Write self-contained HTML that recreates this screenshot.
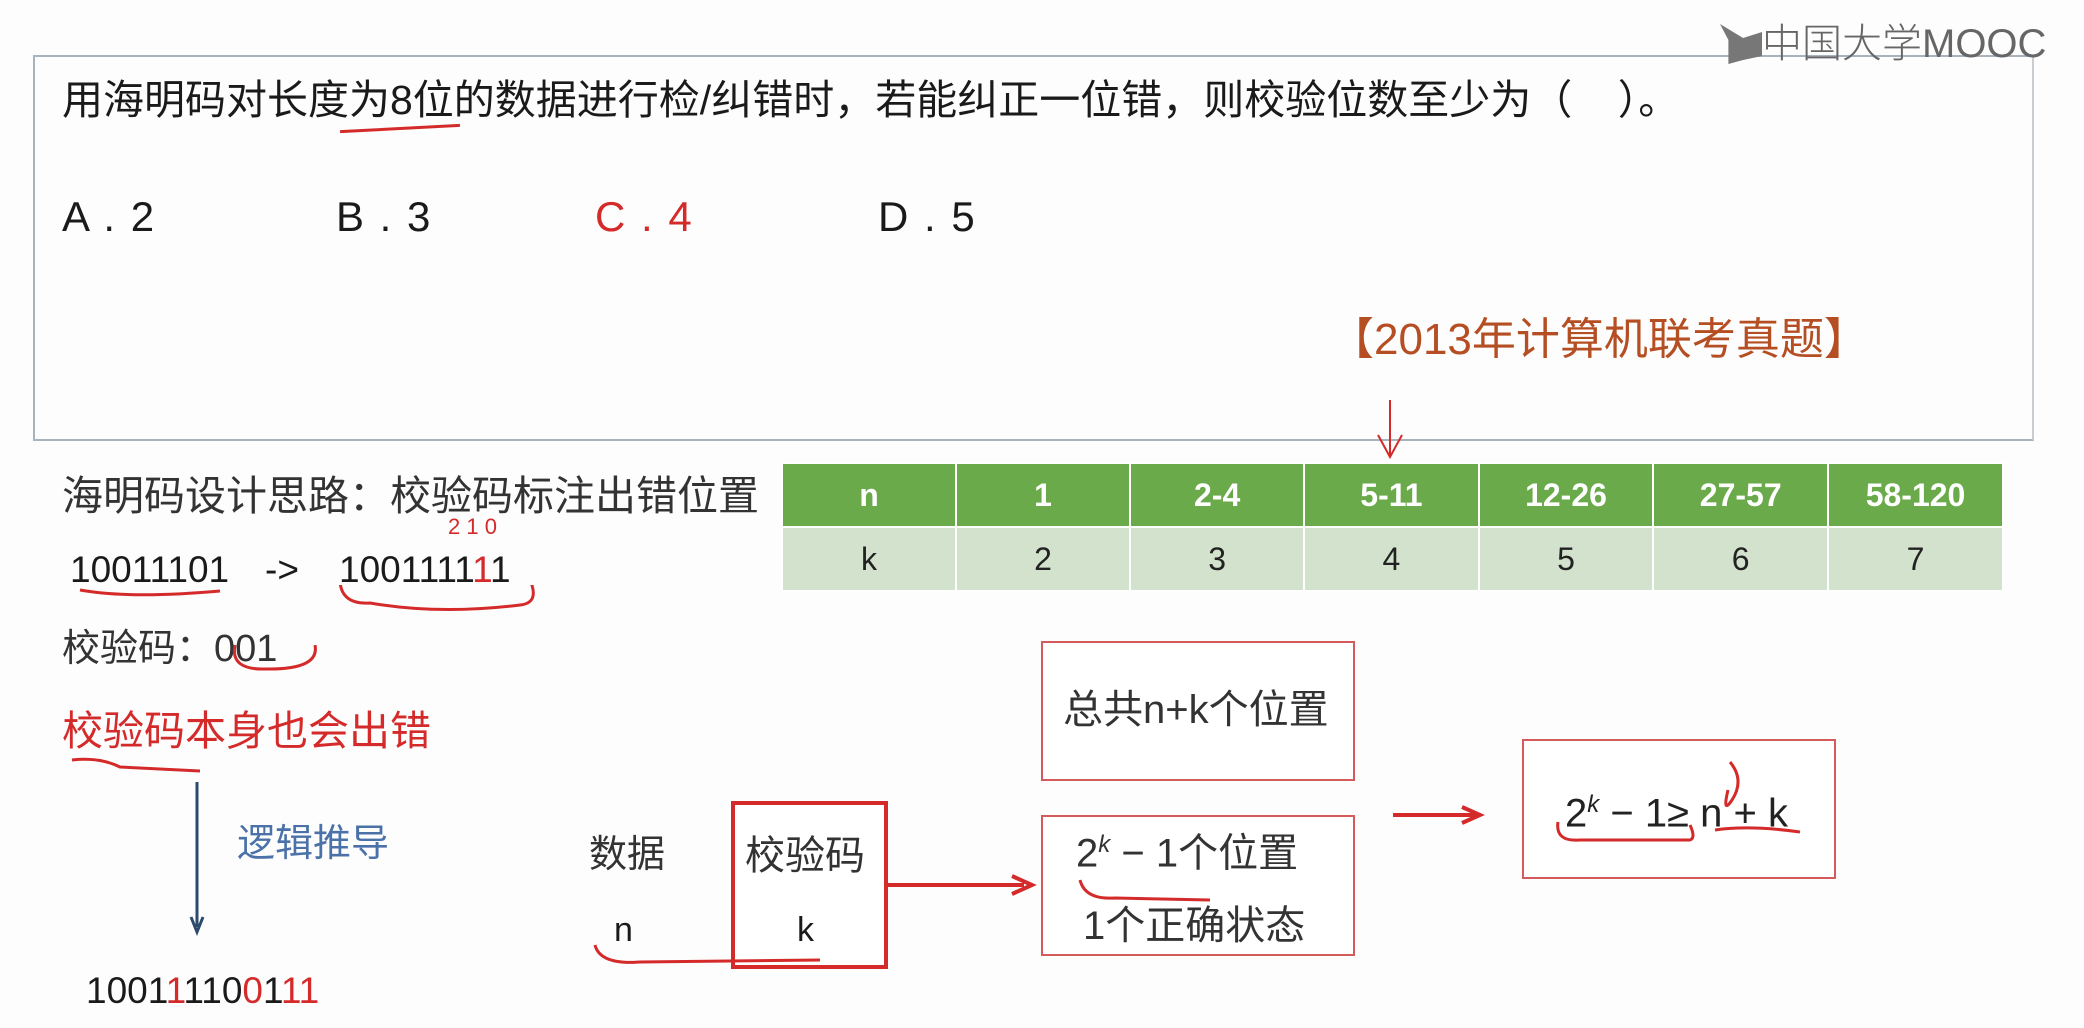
<!DOCTYPE html>
<html><head><meta charset="utf-8"><style>
body{margin:0;width:2084px;height:1028px;background:#fdfdfd;position:relative;overflow:hidden;font-family:"Liberation Sans","Noto Sans CJK SC",sans-serif;color:#1a1a1a}
.a{position:absolute;white-space:nowrap;line-height:1}
.r{color:#d42a2a}
table{border-collapse:collapse;position:absolute;left:781px;top:462px;width:1223px;font-size:32px;text-align:center}
td{border:2px solid #fff;height:60px;width:174px}
.h td{background:#6aaa4a;color:#fff;font-weight:bold}
.k td{background:#d3e2cc;color:#222}
.box{position:absolute;border:2px solid #d55a5a;background:#fff}
</style></head><body>
<div style="position:absolute;left:33px;top:55px;width:1997px;height:382px;border:2px solid #a9b3bd;border-right-color:#c8cdd2"></div>
<div class="a" style="left:1720px;top:24px;width:42px;height:40px;background:#777;clip-path:polygon(0 0,55% 35%,100% 20%,100% 80%,55% 90%,20% 100%,20% 40%)"></div>
<div class="a" style="left:1762px;top:24px;font-size:40px;color:#666;font-weight:300">中国大学MOOC</div>
<div class="a" style="left:62px;top:80px;font-size:41px">用海明码对长度为8位的数据进行检/纠错时，若能纠正一位错，则校验位数至少为（&nbsp;&nbsp;&nbsp;&nbsp;）。</div>
<div class="a" style="left:340px;top:127px;width:120px;height:3px;background:#d42a2a;transform:rotate(-3deg)"></div>
<div class="a" style="left:62px;top:196px;font-size:42px;word-spacing:4px">A . 2</div>
<div class="a" style="left:336px;top:196px;font-size:42px;word-spacing:4px">B . 3</div>
<div class="a r" style="left:595px;top:196px;font-size:42px;word-spacing:4px">C . 4</div>
<div class="a" style="left:878px;top:196px;font-size:42px;word-spacing:4px">D . 5</div>
<div class="a" style="left:1330px;top:318px;font-size:44px;color:#b54e22">【2013年计算机联考真题】</div>
<svg class="a" style="left:1370px;top:395px" width="40" height="70"><path d="M20 5 L20 60 M8 40 L20 62 L32 40" stroke="#d42a2a" stroke-width="2" fill="none"/></svg>
<table><tr class="h"><td>n</td><td>1</td><td>2-4</td><td>5-11</td><td>12-26</td><td>27-57</td><td>58-120</td></tr>
<tr class="k"><td>k</td><td>2</td><td>3</td><td>4</td><td>5</td><td>6</td><td>7</td></tr></table>
<div class="a" style="left:62px;top:476px;font-size:41px;color:#333">海明码设计思路：校验码标注出错位置</div>
<div class="a r" style="left:448px;top:516px;font-size:22px">2 1 0</div>
<div class="a" style="left:70px;top:551px;font-size:37px">10011101</div>
<div class="a" style="left:265px;top:551px;font-size:37px">-&gt;</div>
<div class="a" style="left:339px;top:551px;font-size:37px">10011<span>1</span>1<span class="r">1</span>1</div>
<svg class="a" style="left:60px;top:585px" width="480" height="40"><path d="M20 5 Q70 14 160 6 M280 -10 Q278 20 310 18 Q380 30 460 20 Q480 18 470 -5" stroke="#d42a2a" stroke-width="3" fill="none"/></svg>
<div class="a" style="left:62px;top:630px;font-size:38px;color:#333">校验码：001</div>
<svg class="a" style="left:225px;top:645px" width="100" height="40"><path d="M10 0 Q5 25 40 24 Q95 25 90 0" stroke="#d42a2a" stroke-width="3" fill="none"/></svg>
<div class="a r" style="left:62px;top:711px;font-size:41px">校验码本身也会出错</div>
<svg class="a" style="left:70px;top:755px" width="140" height="30"><path d="M2 5 Q30 2 50 12 L130 16" stroke="#d42a2a" stroke-width="3" fill="none"/></svg>
<svg class="a" style="left:185px;top:782px" width="24" height="155"><path d="M12 0 L12 145 M6 135 L12 150 L18 135" stroke="#2c4a6b" stroke-width="3" fill="none"/></svg>
<div class="a" style="left:237px;top:825px;font-size:38px;color:#4a72a8">逻辑推导</div>
<div class="a" style="left:86px;top:972px;font-size:37px">1001<span class="r">1</span>110<span class="r">0</span>1<span class="r">11</span></div>
<div class="a" style="left:589px;top:836px;font-size:38px;color:#333">数据</div>
<div class="a" style="left:614px;top:913px;font-size:34px">n</div>
<div class="box" style="left:731px;top:801px;width:149px;height:160px;border:4px solid #d42a2a"></div>
<div class="a" style="left:745px;top:836px;font-size:40px;color:#333">校验码</div>
<div class="a" style="left:797px;top:913px;font-size:34px">k</div>
<svg class="a" style="left:590px;top:940px" width="300" height="40"><path d="M5 5 Q10 25 50 22 L230 20" stroke="#d42a2a" stroke-width="3" fill="none"/></svg>
<svg class="a" style="left:884px;top:870px" width="155" height="30"><path d="M0 15 L140 15 M128 6 L148 15 L128 24" stroke="#d42a2a" stroke-width="4" fill="none"/></svg>
<div class="box" style="left:1041px;top:641px;width:310px;height:136px"></div>
<div class="a" style="left:1063px;top:690px;font-size:40px;color:#333">总共n+k个位置</div>
<div class="box" style="left:1041px;top:815px;width:310px;height:137px"></div>
<div class="a" style="left:1076px;top:833px;font-size:40px;color:#333">2<sup style="font-size:24px;font-style:italic">k</sup> − 1个位置</div>
<svg class="a" style="left:1075px;top:878px" width="140" height="30"><path d="M5 2 Q10 22 40 20 L135 22" stroke="#d42a2a" stroke-width="3" fill="none"/></svg>
<div class="a" style="left:1083px;top:906px;font-size:40px;color:#333">1个正确状态</div>
<svg class="a" style="left:1390px;top:803px" width="95" height="25"><path d="M3 12 L85 12 M72 4 L90 12 L72 20" stroke="#d42a2a" stroke-width="4" fill="none"/></svg>
<div class="box" style="left:1522px;top:739px;width:310px;height:136px"></div>
<div class="a" style="left:1565px;top:793px;font-size:40px;color:#222">2<sup style="font-size:24px;font-style:italic">k</sup> − 1≥ n + k</div>
<svg class="a" style="left:1550px;top:760px" width="270" height="90"><path d="M180 2 Q195 20 182 40 Q172 55 178 30 M8 62 Q5 82 30 80 L140 80 Q146 78 140 65 M165 70 Q200 65 250 72" stroke="#d42a2a" stroke-width="3" fill="none"/></svg>
</body></html>
